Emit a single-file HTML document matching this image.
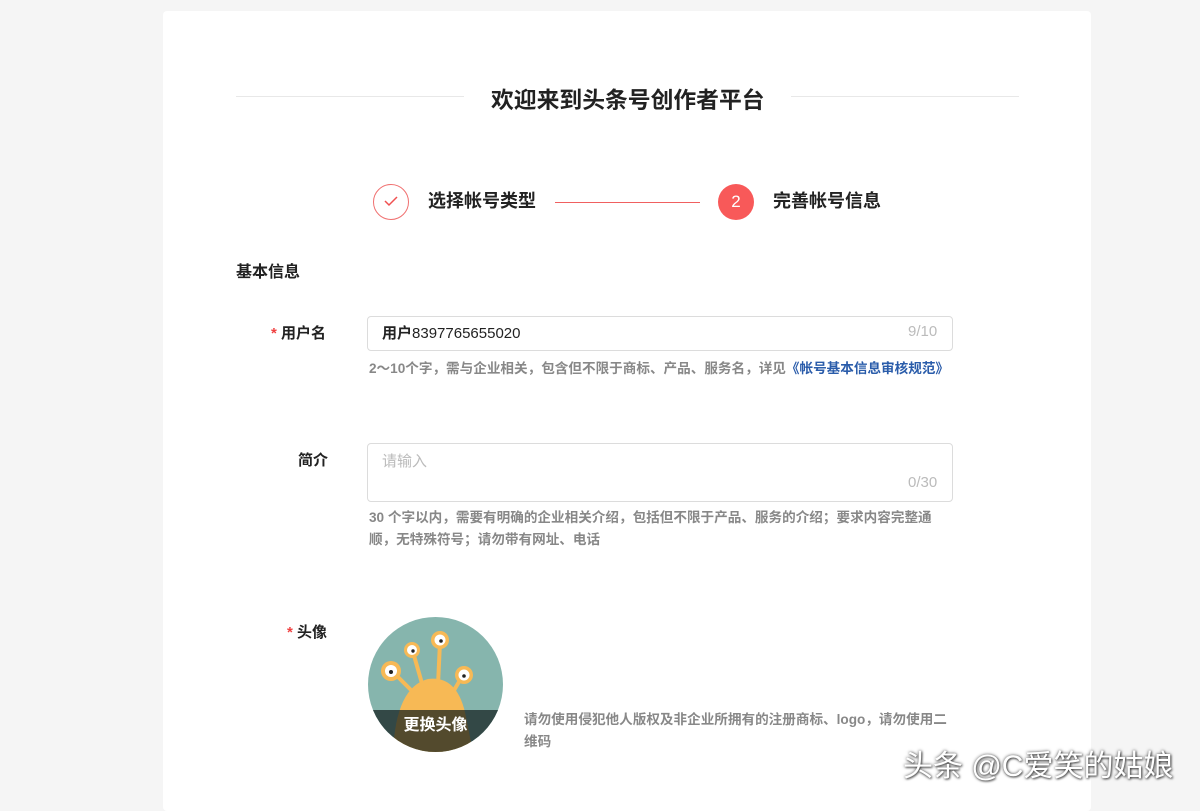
<!DOCTYPE html>
<html><head><meta charset="utf-8"><style>
*{margin:0;padding:0;box-sizing:border-box}
body{width:1200px;height:800px;background:#f5f5f5;font-family:"Liberation Sans","Noto Sans CJK SC",sans-serif;position:relative;overflow:hidden;color:#222}
.card{position:absolute;left:163px;top:11px;width:928px;height:800px;background:#fff;border-radius:4px}
.a{position:absolute}
.line{height:1px;background:#e8e8e8}
.title{font-size:22.8px;font-weight:bold;color:#222}
.b{font-weight:bold}
.input{border:1px solid #dcdcdc;border-radius:4px;background:#fff}
.hint{font-size:13.6px;color:#888;font-weight:bold}
</style></head><body>
<div class="card"></div>
<div class="a line" style="left:236px;top:96px;width:228px"></div>
<div class="a line" style="left:791px;top:96px;width:228px"></div>
<div class="a title" style="left:491px;top:82px">欢迎来到头条号创作者平台</div>

<div class="a" style="left:373px;top:184px;width:36px;height:36px;border:1px solid #f07070;border-radius:50%"></div>
<svg class="a" style="left:382px;top:194px" width="18" height="14"><path d="M3 7 L7 11 L15 3" stroke="#f05050" stroke-width="1.5" fill="none"/></svg>
<div class="a b" style="left:428px;top:187px;font-size:18px">选择帐号类型</div>
<div class="a" style="left:555px;top:202px;width:145px;height:1px;background:#f06060"></div>
<div class="a" style="left:718px;top:184px;width:36px;height:36px;background:#f85959;border-radius:50%;color:#fff;font-size:17px;text-align:center;line-height:36px">2</div>
<div class="a b" style="left:773px;top:187px;font-size:18px">完善帐号信息</div>

<div class="a b" style="left:236px;top:258px;font-size:16px">基本信息</div>

<div class="a b" style="left:271px;top:322px;font-size:15px"><span style="color:#f04040">* </span>用户名</div>
<div class="a input" style="left:367px;top:316px;width:586px;height:35px"></div>
<div class="a" style="left:382px;top:322px;font-size:15px"><b>用户</b>8397765655020</div>
<div class="a" style="left:908px;top:323px;font-size:15px;color:#bbb">9/10</div>
<div class="a hint" style="left:369px;top:357px">2〜10个字，需与企业相关，包含但不限于商标、产品、服务名，详见<span style="color:#2a5caa">《帐号基本信息审核规范》</span></div>

<div class="a b" style="left:298px;top:449px;font-size:15px">简介</div>
<div class="a input" style="left:367px;top:443px;width:586px;height:59px"></div>
<div class="a" style="left:382px;top:450px;font-size:15px;color:#bbb">请输入</div>
<div class="a" style="left:908px;top:474px;font-size:15px;color:#bbb">0/30</div>
<div class="a hint" style="left:369px;top:507px;width:572px;line-height:22px">30 个字以内，需要有明确的企业相关介绍，包括但不限于产品、服务的介绍；要求内容完整通顺，无特殊符号；请勿带有网址、电话</div>

<div class="a b" style="left:287px;top:621px;font-size:15px"><span style="color:#f04040">* </span>头像</div>
<div class="a" style="left:368px;top:617px;width:135px;height:135px;border-radius:50%;overflow:hidden;background:#86b5ad">
<svg width="135" height="135" style="position:absolute;left:0;top:0">
<g stroke="#f7b955" stroke-width="4" fill="none"><path d="M45 75 L25 55"/><path d="M55 70 L45 35"/><path d="M70 68 L72 25"/><path d="M85 75 L95 58"/></g>
<path d="M25 135 Q28 70 60 62 Q90 58 98 100 L105 135 Z" fill="#f7b955"/>
<g fill="#f7b955"><circle cx="23" cy="54" r="10"/><circle cx="44" cy="33" r="8"/><circle cx="72" cy="23" r="9"/><circle cx="96" cy="58" r="9"/></g>
<g fill="#fff"><circle cx="23" cy="54" r="6"/><circle cx="44" cy="33" r="5"/><circle cx="72" cy="23" r="5.5"/><circle cx="96" cy="58" r="5.5"/></g>
<g fill="#222"><circle cx="23" cy="55" r="2"/><circle cx="45" cy="34" r="1.7"/><circle cx="73" cy="24" r="1.8"/><circle cx="96" cy="59" r="1.8"/></g>
</svg>
<div style="position:absolute;left:0;top:93px;width:135px;height:42px;background:rgba(20,30,30,.72);color:#fff;font-weight:bold;font-size:16px;text-align:center;line-height:32px">更换头像</div>
</div>
<div class="a hint" style="left:524px;top:709px;width:428px;line-height:22px">请勿使用侵犯他人版权及非企业所拥有的注册商标、logo，请勿使用二维码</div>

<div class="a" style="left:903px;top:741px;font-size:30px;color:#fff;text-shadow:0 0 3px rgba(0,0,0,.7),1px 1px 2px rgba(0,0,0,.6)">头条 @C爱笑的姑娘</div>
</body></html>
